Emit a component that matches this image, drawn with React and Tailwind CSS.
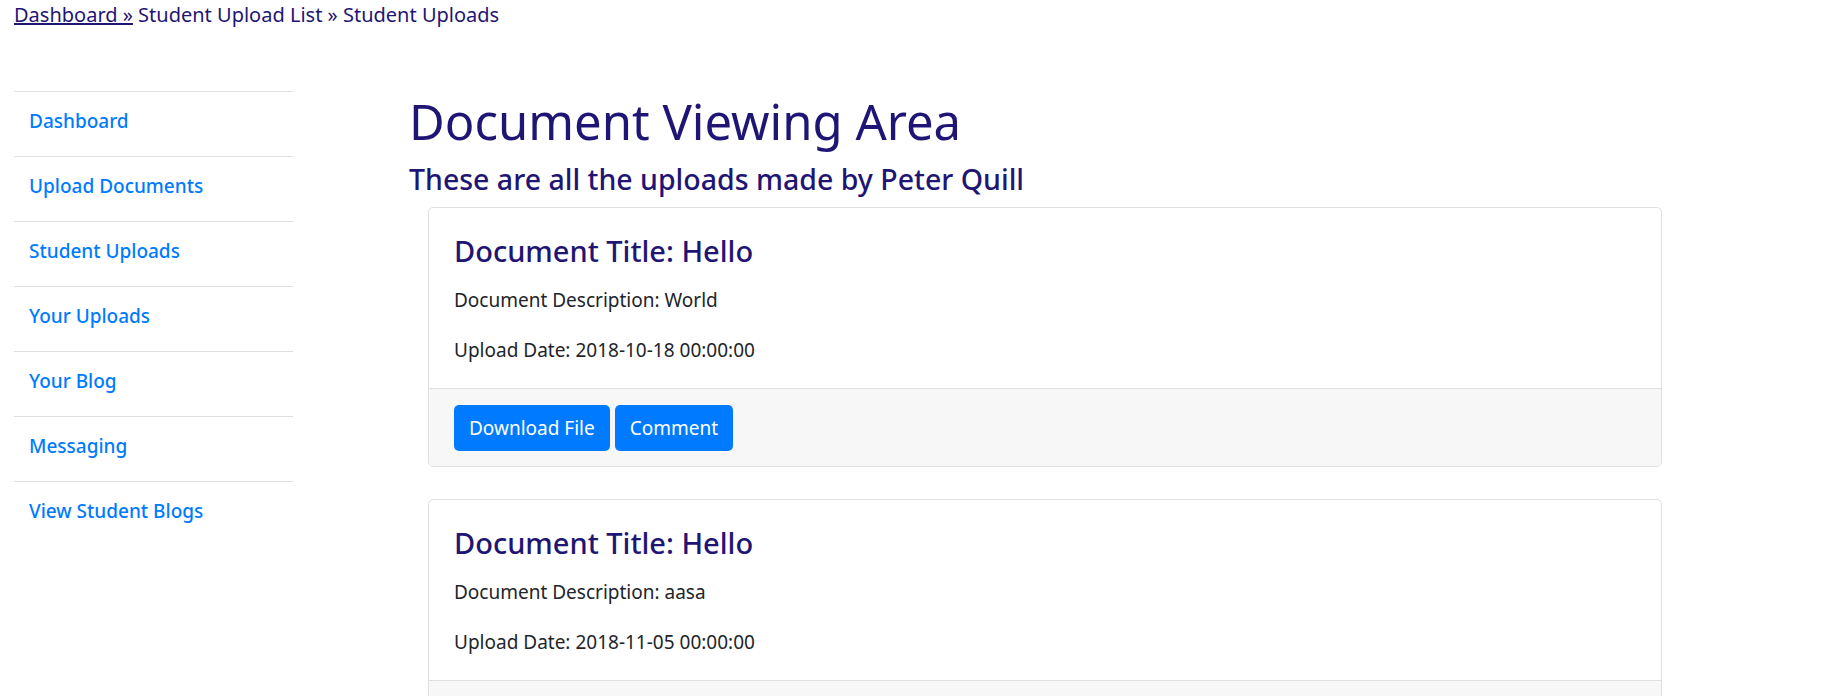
import React from 'react';

const navy = 'text-[#1f1574]';

const sideLinks = [
    "Dashboard",
    "Upload Documents",
    "Student Uploads",
    "Your Uploads",
    "Your Blog",
    "Messaging",
    "View Student Blogs",
];

const uploads = [
    { title: "Hello", description: "World", date: "2018-10-18 00:00:00" },
    { title: "Hello", description: "aasa", date: "2018-11-05 00:00:00" },
];

const UploadCard = ({ upload }) => (
    <div className="border border-[#dfdfdf] rounded-[5px] bg-white mb-[32px] overflow-hidden">
        <div className="px-[25px] pt-[25px] pb-[23px]">
            <h4 className={`text-[29px] leading-[36px] font-medium mb-[16px] ${navy}`}>
                Document Title: {upload.title}
            </h4>
            <p className="text-[19px] leading-[30px] text-[#212529] mb-[20px]">
                Document Description: {upload.description}
            </p>
            <p className="text-[19px] leading-[30px] text-[#212529]">
                Upload Date: {upload.date}
            </p>
        </div>
        <div className="border-t border-[#dfdfdf] bg-[#f7f7f7] px-[25px] pt-[16px] pb-[15px] flex gap-[5px]">
            <button className="bg-[#007bff] text-white text-[19px] leading-[30px] px-[15px] py-[8px] rounded-[5px]">
                Download File
            </button>
            <button className="bg-[#007bff] text-white text-[19px] leading-[30px] px-[15px] py-[8px] rounded-[5px]">
                Comment
            </button>
        </div>
    </div>
);

export default function App() {
    return (
        <div className="min-h-screen bg-white font-['Noto_Sans',sans-serif] overflow-hidden">
            {/* Breadcrumb */}
            <div className={`pl-[14px] text-[20px] leading-[30px] ${navy}`}>
                <a href="#" className="underline">Dashboard »</a> Student Upload List » Student Uploads
            </div>

            <div className="flex mt-[61px]">
                {/* Sidebar */}
                <ul className="ml-[14px] w-[279px] shrink-0">
                    {sideLinks.map((label) => (
                        <li key={label} className="border-t border-[#dfdfdf] px-[15px] pt-[14px] pb-[20px]">
                            <a href="#" className="text-[#007bff] text-[19px] leading-[30px] font-medium">
                                {label}
                            </a>
                        </li>
                    ))}
                </ul>

                {/* Contenido principal */}
                <div className="ml-[116px] w-[1253px]">
                    <h1 className={`text-[49px] leading-[60px] mb-[10px] ${navy}`}>Document Viewing Area</h1>
                    <h3 className={`text-[28.5px] leading-[36px] font-medium mb-[10px] ${navy}`}>
                        These are all the uploads made by Peter Quill
                    </h3>
                    <div className="ml-[19px]">
                        {uploads.map((upload, index) => (
                            <UploadCard key={index} upload={upload} />
                        ))}
                    </div>
                </div>
            </div>
        </div>
    );
}
